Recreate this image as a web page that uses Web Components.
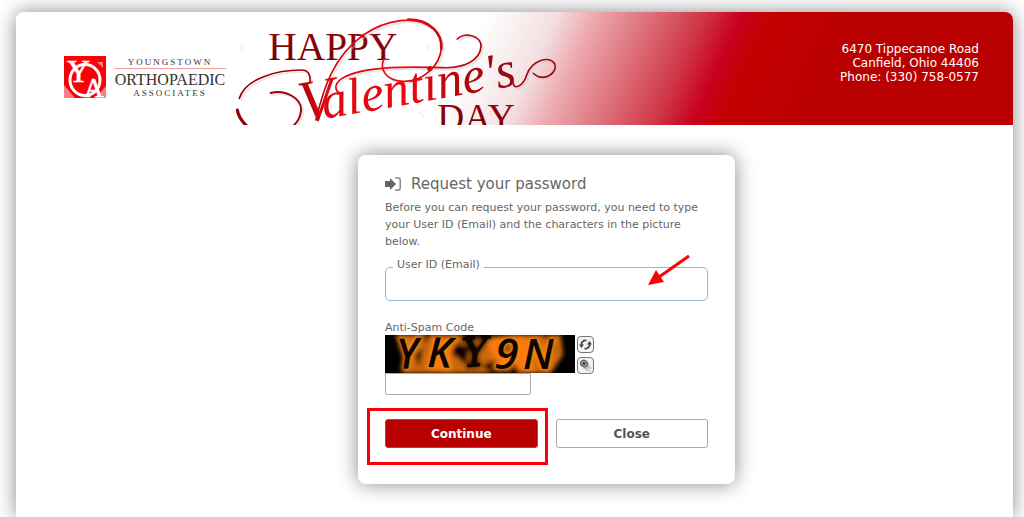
<!DOCTYPE html>
<html lang="en">
<head>
<meta charset="utf-8">
<title>Request your password</title>
<style>
html, body { height: 100%; }
body { margin: 0; background: #fff; color: #666; font-family: Verdana, "DejaVu Sans", sans-serif; overflow: hidden; }
</style>
</head>
<body>
<page-card>
  <site-header slot="header">
    <practice-logo slot="logo"></practice-logo>
    <holiday-art slot="art"></holiday-art>
    <span>6470 Tippecanoe Road<br>Canfield, Ohio 44406<br>Phone: (330) 758-0577</span>
  </site-header>
  <password-panel></password-panel>
</page-card>
<script>
class Base extends HTMLElement {
  constructor() {
    super();
    this.attachShadow({ mode: "open" }).innerHTML = this.constructor.markup;
  }
}

class PageCard extends Base {
  static markup = `
  <style>
    :host { display: flex; flex-direction: column; box-sizing: border-box; min-height: 100%; padding: 12px 11px 0 16px; }
    .card { flex: 1; background: #fff; border-radius: 8px 8px 0 0; box-shadow: 0 0 20px #888; }
    main { display: flex; justify-content: center; padding: 30px 0 33px 64px; }
  </style>
  <div class="card"><slot name="header"></slot><main><slot></slot></main></div>`;
}

class SiteHeader extends Base {
  static markup = `
  <style>
    :host { display: block; }
    header { display: flex; height: 113px; border-radius: 8px 8px 0 0; overflow: hidden;
      background: linear-gradient(114deg, #fff 430px, #f3e0e1 494px, #eda9af 530px, #dd707a 580px, #cf3848 628px, #c9001e 664px, #c40000 690px, #b90000 770px); }
    .logo { padding: 44px 4px 0 48px; }
    address { margin: 30px 34px 0 auto; color: #fff; font-size: 12px; font-style: normal; line-height: 14px; text-align: right; white-space: nowrap; }
  </style>
  <header>
    <div class="logo"><slot name="logo"></slot></div>
    <slot name="art"></slot>
    <address><slot></slot></address>
  </header>`;
}

class PracticeLogo extends Base {
  static markup = `
  <style>
    :host { display: flex; gap: 8px; font-family: "Liberation Serif", serif; color: #333; }
    svg { display: block; flex: none; overflow: visible; }
    .name { width: 112px; text-align: center; }
    .small { font-size: 9px; line-height: 12px; letter-spacing: 2px; }
    .big { font-size: 16px; line-height: 22px; border-top: 1px solid #f39a9e; display: flex; justify-content: center; }
    .tail { line-height: 5px; }
  </style>
  <svg width="42" height="42" viewBox="0 0 42 42" aria-hidden="true">
    <rect width="42" height="42" fill="#fb0007"/>
    <path d="M0 29L11 42H0zM36 37L42 30V42H29z" fill="#f87f83"/>
    <path d="M33 6l6 0v6z" fill="#f87f83"/>
    <ellipse cx="21" cy="24" rx="15" ry="15.500" fill="none" stroke="#fff" stroke-width="3"/>
    <g fill="#fff" font-family="Liberation Serif, serif">
      <text x="3" y="26" font-size="32" stroke="#fff" stroke-width=".6">Y</text>
      <text x="20" y="41" font-size="27" stroke="#fff" stroke-width=".6">A</text>
    </g>
  </svg>
  <div class="name">
    <div class="small">YOUNGSTOWN</div>
    <div class="big">ORTHOPAEDIC</div>
    <div class="small tail">ASSOCIATES</div>
  </div>`;
}

class HolidayArt extends Base {
  static markup = `
  <style>
    :host { display: block; flex: none; }
    svg { display: block; }
  </style>
  <svg width="340" height="113" viewBox="0 21 1020 339" role="img" aria-label="Happy Valentine's Day">
    <defs>
      <linearGradient id="r" gradientUnits="userSpaceOnUse" x1="20" y1="0" x2="980" y2="0">
        <stop offset="0" stop-color="#8d0005"/><stop offset=".22" stop-color="#a80208"/><stop offset=".35" stop-color="#e00810"/>
        <stop offset=".55" stop-color="#ec0710"/><stop offset=".72" stop-color="#b5060c"/><stop offset="1" stop-color="#9e0a12"/>
      </linearGradient>
      <linearGradient id="t" gradientUnits="userSpaceOnUse" x1="0" y1="0" x2="680" y2="0">
        <stop offset="0" stop-color="#a80208"/><stop offset=".12" stop-color="#e00810"/>
        <stop offset=".5" stop-color="#ec0710"/><stop offset=".72" stop-color="#b5060c"/><stop offset="1" stop-color="#8e0a12"/>
      </linearGradient>
      <linearGradient id="d" x1="0" y1="0" x2="0" y2="1"><stop stop-color="#a00407"/><stop offset="1" stop-color="#650003"/></linearGradient>
      <g id="swash" fill="none" stroke-linecap="round">
        <path d="M22 315C24 330 35 348 49 362" stroke-width="9"/>
        <path d="M28 280C48 218 145 195 215 195Q243 195 240 232" stroke-width="5"/>
        <path d="M122 264C165 252 217 280 213 318Q210 345 190 362" stroke-width="6"/>
        <path d="M258 345C280 250 310 155 400 90C470 42 560 30 605 68" stroke-width="5"/>
        <path d="M535 44C600 44 637 85 634 130" stroke-width="8"/>
        <path d="M634 130C630 180 580 232 518 229C465 226 446 190 464 158" stroke-width="5"/>
        <path d="M338 264C313 264 310 238 335 221C400 180 560 185 640 188C700 190 750 168 753 125C755 90 700 80 682 102" stroke-width="5"/>
        <path d="M850 235C850 255 880 245 890 210C905 165 960 150 974 177C985 200 945 235 910 205" stroke-width="5"/>
      </g>
    </defs>
    <g fill="none" stroke="#f8dfe1" stroke-width="3"><path d="M40 120q-16 8 0 20M590 118q14 8 0 18M565 320q18 6 14 20"/></g>
    <g fill="url(#d)" font-family="Liberation Serif, serif" font-size="112">
      <text x="115" y="166" font-size="118">HAPPY</text>
      <text x="622" y="376">DAY</text>
    </g>
    <use href="#swash" x="5" y="6" stroke="#ccc" opacity=".5"/>
    <use href="#swash" stroke="url(#r)"/>
    <text transform="translate(216 354) rotate(-10)" fill="url(#t)" font-family="Liberation Serif, serif" font-style="italic" font-size="154"><tspan font-size="180">V</tspan><tspan x="68" y="0">alentine's</tspan></text>
  </svg>`;
}

class CaptchaPicture extends Base {
  static markup = `
  <style>
    :host { display: block; }
    svg { display: block; }
  </style>
  <svg width="190" height="38" viewBox="0 0 190 38" role="img" aria-label="Anti-spam picture">
    <defs>
      <filter id="b" x="-20%" y="-20%" width="140%" height="140%"><feGaussianBlur stdDeviation="2.200"/></filter>
      <g id="t" font-family="Open Sans, sans-serif" font-size="42" font-weight="600" font-style="italic">
        <text transform="translate(12 34) rotate(-3)">Y</text>
        <text transform="translate(42 32) rotate(2)">K</text>
        <text transform="translate(78 32) rotate(-4)" font-family="DejaVu Serif, serif" font-size="40" font-weight="400" stroke="#0c0500">Y</text>
        <text transform="translate(109 33) rotate(4)">9</text>
        <text transform="translate(138 34)">N</text>
      </g>
    </defs>
    <rect width="190" height="38"/>
    <g filter="url(#b)">
      <path d="M10 0H32L36 9L42 0H78L90 4L125 0H176L178 20L166 38H132L120 34L100 38H18L24 26z" fill="#c9680a"/>
      <path d="M48 5L66 12L66 38L44 34zM100 3L140 0L150 38L112 32z" fill="#fa780a"/>
      <path d="M28 -4L48 -4L40 8zM72 8L84 12L82 30L66 18zM114 18Q116 9 126 9L129 14Q124 22 116 20M156 -2L170 18L170 -2zM98 30L112 24L116 38L100 34zM128 24L134 38L120 40zM30 20L38 12L34 32z" fill="#080200"/>
      <use href="#t" fill="none" stroke="#f78408" stroke-width="4"/>
    </g>
    <use href="#t" fill="#0c0500"/>
  </svg>`;
}

class PasswordPanel extends Base {
  static markup = `
  <style>
    :host { display: block; box-sizing: border-box; width: 377px; padding: 19px 27px 36px; background: #fff; border-radius: 8px; box-shadow: 0 0 20px #888; font-size: 11px; line-height: 14px; }
    h1 { display: flex; align-items: center; gap: 10px; margin: 0 0 5px; font-size: 15px; line-height: 20px; font-weight: 400; }
    p { margin: 0 0 8px; line-height: 17px; }
    fieldset { position: relative; margin: 0 0 20px; padding: 0; border: 1px solid #8fb7df; border-radius: 5px; min-width: 0; }
    legend { margin-left: 7px; padding: 0 4px 4px; }
    fieldset input { display: block; box-sizing: border-box; width: 100%; height: 24px; padding: 0 10px; border: 0; background: none; outline: 0; font: inherit; }
    .arrow { position: absolute; right: 16px; top: -22px; pointer-events: none; }
    .code { display: block; }
    .row { display: flex; gap: 2px; height: 38px; }
    .tools { display: flex; flex-direction: column; gap: 4px; padding-top: 1px; }
    .tools button { display: block; width: 17px; height: 17px; padding: 0; border: 1px solid #777; border-radius: 4px; background: #f3f3f3; }
    .tools svg { display: block; }
    .answer { display: block; box-sizing: border-box; width: 146px; height: 22px; margin: 0 0 24px; padding: 0 4px; border: 1px solid #aaa; border-radius: 0 0 2px 2px; background: #fff; font: inherit; }
    .actions { display: grid; grid-template-columns: 1fr 1fr; gap: 18px; }
    .mark { position: relative; display: grid; }
    .mark::after { content: ""; position: absolute; inset: -11px -10px -17px -18px; border: 3px solid #fb0007; pointer-events: none; }
    .actions button { height: 29px; padding: 0; border: 1px solid #aaa; border-radius: 3px; background: #fff; color: #555; font: bold 12px/14px Verdana, "DejaVu Sans", sans-serif; }
    .actions .go { border-color: #c63a3a; background: #b90000; color: #fff; }
  </style>
  <form>
    <h1><svg width="16" height="14" viewBox="0 0 16 14" aria-hidden="true"><path d="M0 4h5V1l6 6-6 6v-3H0z" fill="#666"/><path d="M10 .8h3q2.200 0 2.200 2.200v8q0 2.200-2.200 2.200h-3" fill="none" stroke="#777" stroke-width="1.300"/></svg>Request your password</h1>
    <p>Before you can request your password, you need to type your User ID (Email) and the characters in the picture below.</p>
    <fieldset>
      <legend><label for="user">User ID (Email)</label></legend>
      <input id="user" type="email">
      <svg class="arrow" width="44" height="34" viewBox="0 0 44 34" aria-hidden="true"><path d="M42 2L12 23" stroke="#fb0007" stroke-width="3"/><path d="M1 31L9 16L17 28z" fill="#fb0007"/></svg>
    </fieldset>
    <label class="code" for="code">Anti-Spam Code</label>
    <div class="row">
      <captcha-picture></captcha-picture>
      <div class="tools">
        <button type="button" aria-label="New picture"><svg width="15" height="15" viewBox="0 0 15 15"><g fill="none" stroke="#444" stroke-width="1.800"><path d="M3.500 8.500A4 4 0 0 1 8.500 3.600"/><path d="M11.500 6.500A4 4 0 0 1 6.500 11.400"/></g><path d="M1 7.500h5L3.500 11zM9 7.500h5L11.500 4z" fill="#444"/></svg></button>
        <button type="button" aria-label="Play sound"><svg width="15" height="15" viewBox="0 0 15 15"><path d="M5 10L11 5L12 10L8 12z" fill="#bbb"/><ellipse cx="6" cy="5.500" rx="3.500" ry="3.200" transform="rotate(35 6 5.500)" fill="#999" stroke="#555"/><circle cx="6" cy="5.500" r="1.300" fill="#333"/><path d="M10 13q3-1 3-4M8 13q1 0 2-1" fill="none" stroke="#bbb"/></svg></button>
      </div>
    </div>
    <input class="answer" id="code" type="text">
    <div class="actions">
      <div class="mark"><button class="go" type="button">Continue</button></div>
      <button type="button">Close</button>
    </div>
  </form>`;
}

customElements.define("captcha-picture", CaptchaPicture);
customElements.define("practice-logo", PracticeLogo);
customElements.define("holiday-art", HolidayArt);
customElements.define("site-header", SiteHeader);
customElements.define("password-panel", PasswordPanel);
customElements.define("page-card", PageCard);
</script>
</body>
</html>
